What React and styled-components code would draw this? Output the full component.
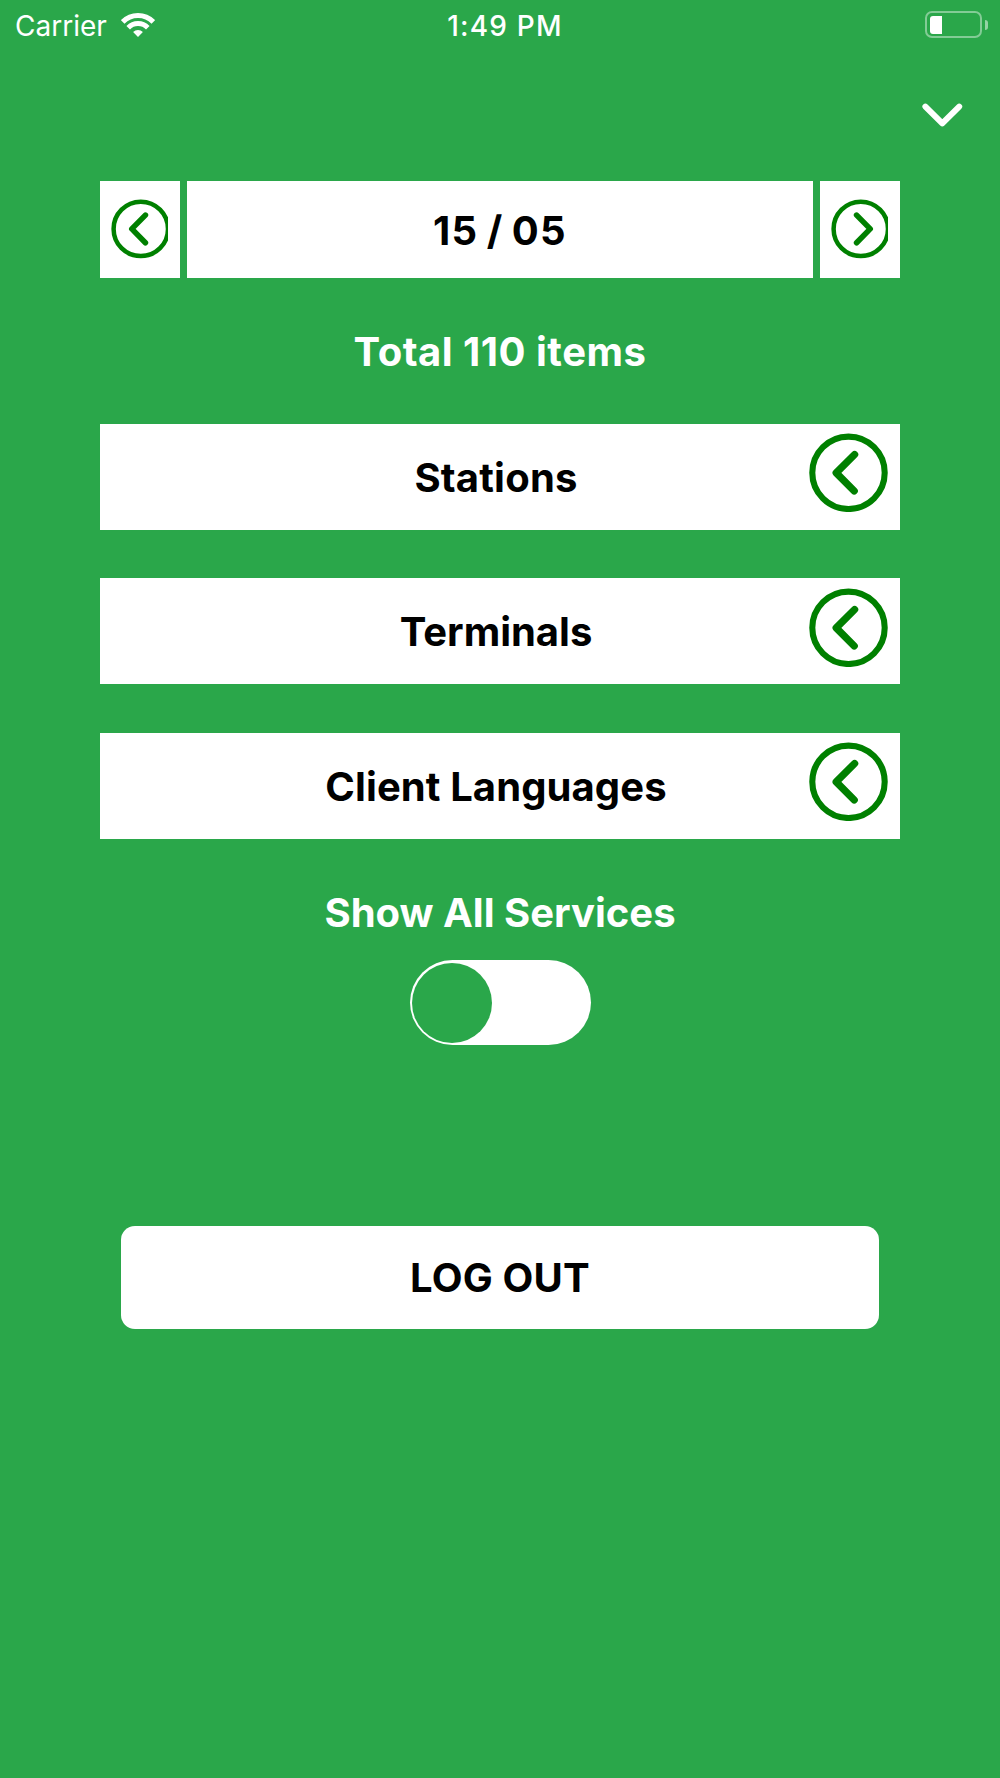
import React, { useState } from "react";
import styled, { createGlobalStyle } from "styled-components";

const filters = [
	{ name: "Stations", spacing: "0.2px" },
	{ name: "Terminals", spacing: "0" },
	{ name: "Client Languages", spacing: "0.1px" },
];

function WifiIcon() {
	return (
		<svg width="34" height="24" viewBox="0 0 34 24" fill="none">
			<path d="M1.7 8.9A21.6 21.6 0 0 1 32.3 8.9" stroke="#fff" strokeWidth="5" />
			<path d="M7.2 14.7A13.8 13.8 0 0 1 26.8 14.7" stroke="#fff" strokeWidth="5" />
			<path d="M12.1 19A7.3 7.3 0 0 1 21.9 19L17 24Z" fill="#fff" />
		</svg>
	);
}

function ChevronDown() {
	return (
		<svg width="42" height="26" viewBox="0 0 42 26" fill="none">
			<path
				d="M4.4 5.6L21.3 22.3L38.2 5.6"
				stroke="#fff"
				strokeWidth="6"
				strokeLinecap="round"
				strokeLinejoin="round"
			/>
		</svg>
	);
}

// the circle runs a little past the right edge and is cut there
function StepIcon({ next }) {
	return (
		<svg width="57" height="60" viewBox="0 0 57 60" fill="none">
			<circle cx="29.8" cy="29.9" r="27.2" stroke="green" strokeWidth="4.5" />
			<path
				d={next ? "M25.6 16.1L39.2 29.9L25.6 43.7" : "M34.4 16.1L20.8 29.9L34.4 43.7"}
				stroke="green"
				strokeWidth="5.6"
				strokeLinecap="round"
				strokeLinejoin="round"
			/>
		</svg>
	);
}

function RowIcon() {
	return (
		<svg width="79" height="79" viewBox="0 0 79 79" fill="none">
			<circle cx="39.5" cy="39.8" r="36.2" stroke="green" strokeWidth="6.1" />
			<path
				d="M45.6 21.5L27.2 39.9L45.2 58"
				stroke="green"
				strokeWidth="7.3"
				strokeLinecap="round"
				strokeLinejoin="round"
			/>
		</svg>
	);
}

function App() {
	const [showAll, setShowAll] = useState(false);

	return (
		<Screen>
			<GlobalStyle />

			<StatusBar>
				<Carrier>
					<StatusText>Carrier</StatusText>
					<WifiIcon />
				</Carrier>
				<StatusText $weight={500} $spacing="1.2px">
					1:49 PM
				</StatusText>
				<BatteryWrap>
					<Battery>
						<Charge />
					</Battery>
					<BatteryTip />
				</BatteryWrap>
			</StatusBar>

			<CloseBar>
				<IconButton aria-label="Close">
					<ChevronDown />
				</IconButton>
			</CloseBar>

			<DatePicker>
				<StepButton aria-label="Previous day">
					<StepIcon />
				</StepButton>
				<DateBox>
					<Title $spacing="1.3px" $words="-2.5px">
						15 / 05
					</Title>
				</DateBox>
				<StepButton aria-label="Next day">
					<StepIcon next />
				</StepButton>
			</DatePicker>

			<Total>
				<Title $spacing="0.5px">Total 110 items</Title>
			</Total>

			<FilterList>
				{filters.map(({ name, spacing }) => (
					<FilterRow key={name}>
						<Title $spacing={spacing}>{name}</Title>
						<RowIcon />
					</FilterRow>
				))}
			</FilterList>

			<Services>
				<Title>Show All Services</Title>
				<Toggle
					role="switch"
					aria-checked={showAll}
					$on={showAll}
					onClick={() => setShowAll(!showAll)}
				>
					<Thumb />
				</Toggle>
			</Services>

			<LogOut>
				<Title $spacing="0.2px">LOG OUT</Title>
			</LogOut>
		</Screen>
	);
}

export default App;

const GlobalStyle = createGlobalStyle`
	* {
		box-sizing: border-box;
	}

	body {
		margin: 0;
		background: #2aa74a;
	}

	button {
		border: none;
		padding: 0;
		margin: 0;
		color: inherit;
		font: inherit;
		cursor: pointer;
	}

	svg {
		display: block;
		flex-shrink: 0;
	}
`;

const Screen = styled.div`
	display: flex;
	flex-direction: column;
	min-height: 1778px;
	background: #2aa74a;
	color: #fff;
	font-family: Inter, "Liberation Sans", sans-serif;
`;

const StatusBar = styled.header`
	display: grid;
	grid-template-columns: 1fr auto 1fr;
	align-items: center;
	height: 50px;
	padding: 0 12px 0 22px;
`;

const StatusText = styled.span`
	font-size: 28px;
	line-height: 50px;
	padding-top: 1px;
	font-weight: ${(p) => p.$weight || 400};
	letter-spacing: ${(p) => p.$spacing || "0"};
	white-space: nowrap;
`;

const Carrier = styled.div`
	display: flex;
	align-items: center;
	gap: 14px;
	margin-left: -7px;

	svg {
		margin-bottom: 2px;
	}
`;

const BatteryWrap = styled.div`
	display: flex;
	align-items: center;
	justify-content: flex-end;
	gap: 3px;
	margin-bottom: 2px;
`;

const Battery = styled.div`
	width: 57px;
	height: 27px;
	padding: 2px 3px;
	border: 2px solid rgba(255, 255, 255, 0.42);
	border-radius: 7px;
`;

const Charge = styled.div`
	width: 12px;
	height: 18px;
	background: #fff;
	border-radius: 3px 0 0 3px;
	margin-top: 0.5px;
`;

const BatteryTip = styled.div`
	width: 3px;
	height: 10px;
	background: rgba(255, 255, 255, 0.5);
	border-radius: 0 3px 3px 0;
`;

const CloseBar = styled.div`
	display: flex;
	justify-content: flex-end;
	height: 131px;
	padding: 51px 37px 0 0;
`;

const IconButton = styled.button`
	height: 26px;
	background: none;
`;

const DatePicker = styled.div`
	display: flex;
	gap: 7px;
	height: 97px;
	margin: 0 100px;
`;

const StepButton = styled.button`
	display: flex;
	align-items: center;
	width: 80px;
	padding: 0 0 1px 11px;
	background: #fff;
`;

const DateBox = styled.div`
	display: flex;
	flex: 1;
	align-items: center;
	justify-content: center;
	background: #fff;
	color: #000;
`;

const Title = styled.span`
	padding-top: 2px;
	font-size: 40px;
	line-height: 50px;
	font-weight: 700;
	letter-spacing: ${(p) => p.$spacing || "0"};
	word-spacing: ${(p) => p.$words || "0"};
	white-space: nowrap;
`;

const Total = styled.div`
	display: flex;
	justify-content: center;
	height: 52px;
	margin-top: 47px;
`;

const FilterList = styled.div`
	display: flex;
	flex-direction: column;
	gap: 48.5px;
	margin: 46.5px 100px 0;
`;

const FilterRow = styled.button`
	display: flex;
	align-items: center;
	height: 106px;
	padding: 0 12px 0 83px;
	background: #fff;
	color: #000;

	${Title} {
		flex: 1;
		text-align: center;
	}

	svg {
		margin-bottom: 8px;
	}
`;

const Services = styled.div`
	display: flex;
	flex-direction: column;
	align-items: center;
	gap: 22px;
	margin-top: 47.5px;
`;

const Toggle = styled.button`
	display: flex;
	align-items: center;
	justify-content: ${(p) => (p.$on ? "flex-end" : "flex-start")};
	width: 181px;
	height: 85px;
	padding: 0 2px;
	border-radius: 43px;
	background: #fff;
`;

const Thumb = styled.span`
	width: 80px;
	height: 80px;
	border-radius: 50%;
	background: #2aa74a;
`;

const LogOut = styled.button`
	height: 103px;
	margin: 181px 121px 0;
	border-radius: 14px;
	background: #fff;

	${Title} {
		color: #000;
	}
`;
